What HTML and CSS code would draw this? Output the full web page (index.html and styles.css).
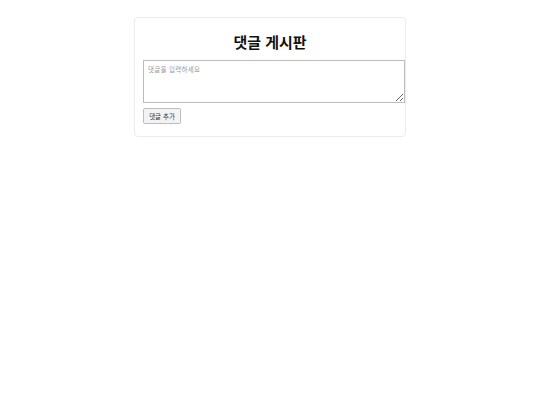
FILE: index.html
```html
<!DOCTYPE html>
<html lang="ko">
<head>
<meta charset="utf-8">
<title>댓글 게시판</title>
<link rel="stylesheet" href="styles.css">
</head>
<body>
<div class="card">
  <h1 class="title">댓글 게시판</h1>
  <textarea class="comment-input" placeholder="댓글을 입력하세요"></textarea>
  <div class="actions">
    <button class="add-btn" type="button">댓글 추가</button>
  </div>
</div>
</body>
</html>
```
FILE: styles.css
```css
html, body {
  margin: 0;
  padding: 0;
  background: #fff;
}
body {
  font-family: "Noto Sans CJK KR", "Noto Sans", sans-serif;
  padding-top: 17px;
}
.card {
  box-sizing: border-box;
  width: 272px;
  margin: 0 0 0 134px;
  padding: 9px 8px 12px 8px;
  border: 1px solid #ececec;
  border-radius: 4px;
}
.title {
  margin: 6px 0 9px 0;
  font-size: 15px;
  line-height: 18px;
  font-weight: 700;
  text-align: center;
  color: #111;
}
.comment-input {
  display: block;
  box-sizing: border-box;
  width: 262px;
  height: 43px;
  padding: 4px;
  margin: 0;
  border: 1px solid #bcbcbc;
  font-family: "Noto Sans CJK KR", sans-serif;
  font-size: 6.5px;
  line-height: 9px;
  letter-spacing: 0.3px;
  resize: vertical;
}
.comment-input::placeholder {
  color: #999;
}
.actions {
  margin-top: 5px;
  display: flex;
}
.add-btn {
  box-sizing: border-box;
  width: 38px;
  height: 16px;
  padding: 0;
  font-family: "Noto Sans CJK KR", sans-serif;
  font-size: 6.5px;
  color: #333;
  background: #f3f3f3;
  border: 1px solid #bdbdbd;
  border-radius: 2px;
}
```
